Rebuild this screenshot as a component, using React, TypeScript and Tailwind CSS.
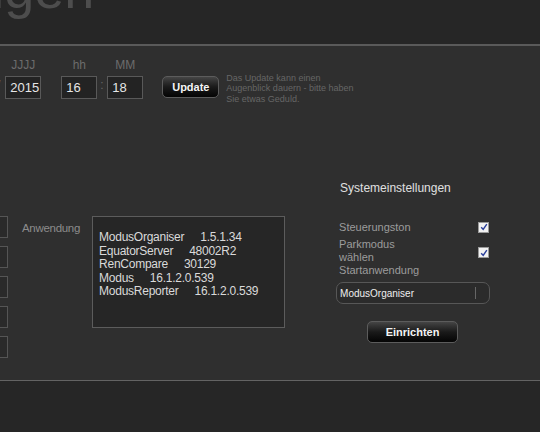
import React from 'react';

const apps = [
  { name: 'ModusOrganiser', version: '1.5.1.34' },
  { name: 'EquatorServer', version: '48002R2' },
  { name: 'RenCompare', version: '30129' },
  { name: 'Modus', version: '16.1.2.0.539' },
  { name: 'ModusReporter', version: '16.1.2.0.539' },
];

const CheckBox = () => (
  <div className="w-[11px] h-[11px] bg-[#f2f2f2] border border-[#9a9a9a] flex items-center justify-center">
    <svg viewBox="0 0 10 10" className="w-[8px] h-[8px]">
      <path d="M1.5 5.2 L4 8 L8.5 1.5" fill="none" stroke="#2a3f9a" strokeWidth={1.8} />
    </svg>
  </div>
);

const DateField = ({ label, value }: { label: string; value: string }) => (
  <div className="flex flex-col items-center">
    <span className="text-[12px] leading-[14px] text-[#6c6c6c]">{label}</span>
    <div className="mt-[4px] w-[36px] h-[23px] border border-[#595959] bg-[#232323] flex items-center pl-[4px] text-[13px] text-[#e6e6e6]">
      {value}
    </div>
  </div>
);

export default function App() {
  return (
    <div className="w-[540px] h-[432px] bg-[#262626] overflow-hidden flex flex-col font-['Liberation_Sans',Arial,sans-serif]">
      <div className="h-[44px] overflow-hidden shrink-0">
        <div className="-mt-[38px] -ml-[230px] text-[54px] leading-none text-[#4d4d4d] whitespace-nowrap">
          Einstellungen
        </div>
      </div>
      <div className="h-[2px] bg-[#5a5a5a] shrink-0" />

      <div className="h-[334px] bg-[#2f2f2f] shrink-0 flex flex-col">
        {/* date / time row */}
        <div className="flex items-end mt-[12px]">
          <span className="-ml-[3px] mb-[5px] text-[12px] text-[#777]">/</span>
          <div className="ml-[5px]">
            <DateField label="JJJJ" value="2015" />
          </div>
          <div className="ml-[20px]">
            <DateField label="hh" value="16" />
          </div>
          <span className="ml-[3px] mb-[5px] w-[7px] text-[12px] text-[#666]">:</span>
          <DateField label="MM" value="18" />
          <button className="ml-[19px] mb-[1px] w-[57px] h-[22px] rounded-[5px] border border-[#5c5c5c] bg-linear-to-b from-[#454545] via-[#1a1a1a] to-[#050505] text-[11px] font-bold text-[#f4f4f4]">
            Update
          </button>
          <div className="ml-[7px] -mb-[5px] text-[9px] leading-[10.5px] text-[#666]">
            <div>Das Update kann einen</div>
            <div>Augenblick dauern - bitte haben</div>
            <div>Sie etwas Geduld.</div>
          </div>
        </div>

        {/* lower section */}
        <div className="flex mt-[81px]">
          <div className="flex mt-[36px]">
            <div className="flex flex-col gap-[8px] -ml-[22px]">
              {[0, 1, 2, 3, 4].map((i) => (
                <div key={i} className="w-[30px] h-[22px] border border-[#555] bg-[#2a2a2a]" />
              ))}
            </div>
            <span className="ml-[14px] mt-[5px] text-[11.5px] leading-[14px] tracking-[-0.3px] text-[#8c8c8c]">Anwendung</span>
            <div className="ml-[12px] w-[193px] h-[112px] border border-[#5c5c5c] bg-[#262626] pt-[14px] pl-[6px] text-[12px] leading-[13.5px] tracking-[-0.25px] text-[#dadada]">
              {apps.map((a) => (
                <div key={a.name} className="whitespace-nowrap">
                  {a.name}
                  <span className="ml-[16px]">{a.version}</span>
                </div>
              ))}
            </div>
          </div>

          <div className="ml-[51px] w-[154px] flex flex-col">
            <span className="ml-[4px] text-[12px] leading-[16px] text-[#e0e0e0]">Systemeinstellungen</span>
            <div className="mt-[24px] flex items-center justify-between pl-[3px] pr-[1px]">
              <span className="text-[11px] leading-[14px] text-[#9c9c9c]">Steuerungston</span>
              <CheckBox />
            </div>
            <div className="mt-[4px] flex items-start justify-between pl-[3px] pr-[1px]">
              <div className="text-[11px] leading-[13px] text-[#9c9c9c]">
                <div>Parkmodus</div>
                <div>wählen</div>
                <div>Startanwendung</div>
              </div>
              <div className="mt-[9px]">
                <CheckBox />
              </div>
            </div>
            <div className="mt-[5px] h-[22px] rounded-[7px] border border-[#575757] bg-[#2b2b2b] flex items-center pl-[3px] pr-[13px]">
              <span className="flex-1 text-[10px] text-[#eeeeee]">ModusOrganiser</span>
              <span className="w-px h-[12px] bg-[#666]" />
            </div>
            <button className="mt-[17px] ml-[31px] w-[91px] h-[22px] rounded-[5px] border border-[#5c5c5c] bg-linear-to-b from-[#454545] via-[#1a1a1a] to-[#050505] text-[11px] font-bold text-[#f4f4f4]">
              Einrichten
            </button>
          </div>
        </div>
      </div>

      <div className="h-px bg-[#636363] shrink-0" />
      <div className="flex-1 bg-[#262626]" />
    </div>
  );
}
